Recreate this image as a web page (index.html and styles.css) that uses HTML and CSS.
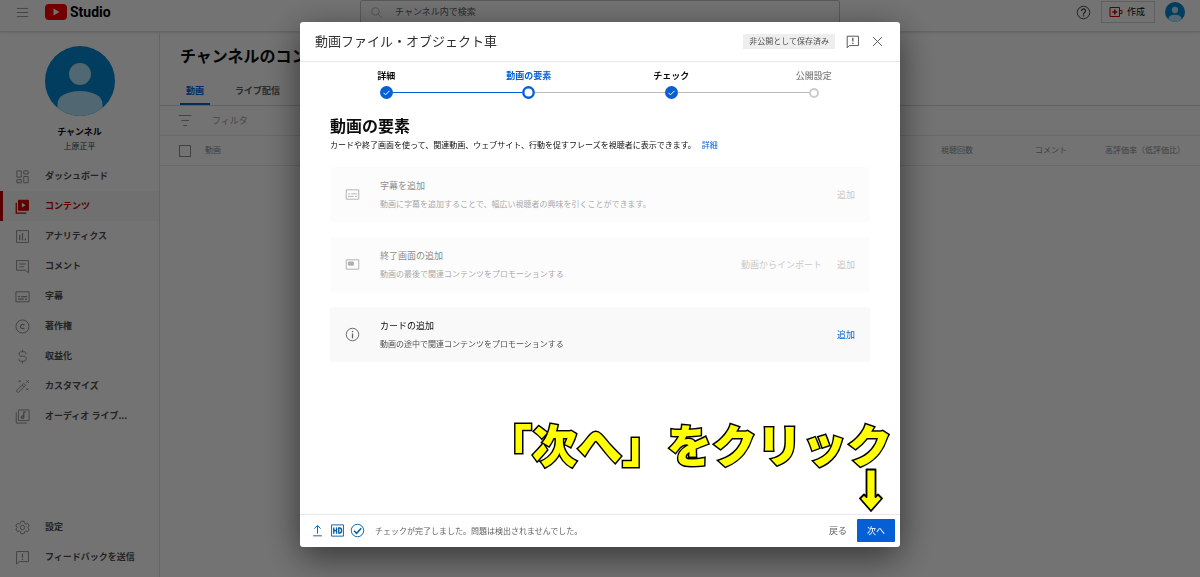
FILE: index.html
```html
<!DOCTYPE html>
<html lang="ja">
<head>
  <meta charset="UTF-8" />
  <meta name="viewport" content="width=device-width, initial-scale=1.0"/>
  <title>YouTube Studio</title>
  <link rel="stylesheet" href="styles.css">
</head>
<body>

  <!-- Top bar -->
  <header class="topbar">
    <div class="brand">
      <button class="icon-button" aria-label="メニュー">
        <svg class="icon" viewBox="0 0 24 24"><path d="M3 5.500h18M3 12h18M3 18.500h18"/></svg>
      </button>
      <a class="logo" href="#">
        <svg class="logo-mark" viewBox="0 0 22 16"><rect width="22" height="16" rx="4" fill="#f00"/><path d="M8.500 4.500v7l6-3.500z" fill="#fff"/></svg>
        <span>Studio</span>
      </a>
    </div>
    <label class="search">
      <svg class="icon" viewBox="0 0 24 24"><circle cx="10" cy="10" r="7"/><path d="M15 15l7 7"/></svg>
      <input type="text" placeholder="チャンネル内で検索" aria-label="チャンネル内で検索">
    </label>
    <div class="actions">
      <button class="icon-button" aria-label="ヘルプ">
        <svg class="icon help" viewBox="0 0 24 24"><circle cx="12" cy="12" r="10"/><path d="M8.800 9.500a3.200 3.200 0 1 1 5 2.600c-1.300.9-1.800 1.400-1.800 2.900M12 16.500v2" stroke-width="2"/></svg>
      </button>
      <button class="create">
        <svg class="create-icon" viewBox="0 0 14 12"><path d="M1 1.500h9.500v9H1zM10.500 4.500h2.500v3h-2.500"/><path d="M5.800 3.500v5M3.300 6h5" stroke-width="1.500"/></svg>
        作成
      </button>
      <svg class="avatar-small" viewBox="0 0 70 70"><use href="#avatar"/></svg>
    </div>
  </header>

  <div class="page">
    <!-- Side navigation -->
    <aside class="sidebar">
      <svg class="avatar" viewBox="0 0 70 70">
        <defs>
          <clipPath id="round"><circle cx="35" cy="35" r="35"/></clipPath>
          <g id="avatar" clip-path="url(#round)">
            <rect width="70" height="70" fill="#0288d1"/>
            <circle cx="35" cy="28" r="11" fill="#b3e5fc"/>
            <path d="M12.500 70V58c0-8 10-13 22.500-13s22.500 5 22.500 13v12z" fill="#b3e5fc"/>
          </g>
        </defs>
        <use href="#avatar"/>
      </svg>
      <div class="channel-label">チャンネル</div>
      <div class="channel-name">上原正平</div>

      <nav class="nav">
        <a href="#"><svg class="icon" viewBox="0 0 24 24"><path d="M3 3h7v10H3zM14 3h7v5h-7zM3 17h7v5H3zM14 12h7v10h-7z"/></svg>ダッシュボード</a>
        <a href="#" class="active"><svg class="icon" viewBox="0 0 24 24"><path d="M2 6v16.500H18" stroke-width="2"/><path d="M5.500 2h16v16h-16z" fill="#c00"/><path d="M11 6v7.500l6-3.700z" fill="#fff" stroke="none"/></svg>コンテンツ</a>
        <a href="#"><svg class="icon" viewBox="0 0 24 24"><path d="M2.500 2.500h19v19h-19z"/><path d="M7.500 9v9M12 6.500V18M16.500 15v3" stroke-width="2"/></svg>アナリティクス</a>
        <a href="#"><svg class="icon" viewBox="0 0 24 24"><path d="M2.500 2.500h19V22l-5-4h-14zM7 8h10M7 12.500h7"/></svg>コメント</a>
        <a href="#"><svg class="icon" viewBox="0 0 24 24"><path d="M1.500 4.500h21v16h-21z"/><path d="M5 12h3M10 12h9M5 16h9M16 16h3" stroke-width="2"/></svg>字幕</a>
        <a href="#"><svg class="icon" viewBox="0 0 24 24"><circle cx="12" cy="12" r="10.500"/><path d="M15 9.800a3.500 3.500 0 1 0 0 4.400" stroke-width="2"/></svg>著作権</a>
        <a href="#"><svg class="icon" viewBox="0 0 24 24"><path d="M17.500 8.500V6.500c0-1-.8-2-2-2h-6c-1.500 0-3 1-3 3.500s1.500 3.500 3 3.500h5c2 0 3.500 1.500 3.500 4s-1.500 4-3.500 4H8.500c-1.200 0-2-1-2-2v-2M12 1v3.500M12 19.500V23"/></svg>収益化</a>
        <a href="#"><svg class="icon" viewBox="0 0 24 24"><path d="M2 19L14 7l3 3L5 22zM11.500 9.500l3 3M6 2l3 3M9 2L6 5M18 2l4 4M22 2l-4 4M18 15l3 3M21 15l-3 3"/></svg>カスタマイズ</a>
        <a href="#"><svg class="icon" viewBox="0 0 24 24"><path d="M2 5.500v17h17M5.500 1.500h17v17h-17z"/><path d="M14 13V5h3.500" stroke-width="2"/><circle cx="12" cy="13" r="2" stroke-width="2"/></svg>オーディオ ライブ...</a>
      </nav>

      <nav class="nav nav-bottom">
        <a href="#"><svg class="icon" viewBox="0 0 24 24"><path d="M9.500 2h5l.7 3.200 2 1.200 3.200-1 2.300 4.200-2.400 2.200v.4l2.400 2.200-2.300 4.200-3.200-1-2 1.200-.7 3.200h-5l-.7-3.200-2-1.200-3.200 1-2.300-4.200 2.400-2.200v-.4L1.300 9.600l2.300-4.200 3.200 1 2-1.200z"/><circle cx="12" cy="12" r="3.500"/></svg>設定</a>
        <a href="#"><svg class="icon" viewBox="0 0 24 24"><path d="M2.500 2.500h19v16H7L2.500 22.500z"/><path d="M12 6v6M12 14v2" stroke-width="2"/></svg>フィードバックを送信</a>
      </nav>
    </aside>

    <!-- Channel content -->
    <main class="content">
      <h1>チャンネルのコンテンツ</h1>
      <div class="tabs">
        <button class="tab selected">動画</button>
        <button class="tab">ライブ配信</button>
      </div>
      <label class="filter">
        <svg class="icon" viewBox="0 0 24 24"><path d="M3 4h20M7 12h12M10 20h6"/></svg>
        <input type="text" placeholder="フィルタ" aria-label="フィルタ">
      </label>
      <table class="videos">
        <thead>
          <tr>
            <th class="col-check"><input type="checkbox" aria-label="すべて選択"></th>
            <th class="col-video">動画</th>
            <th class="col-views">視聴回数</th>
            <th class="col-comments">コメント</th>
            <th class="col-likes">高評価率（低評価比）</th>
          </tr>
        </thead>
      </table>
    </main>
  </div>

  <!-- Upload dialog -->
  <div class="overlay">
    <section class="dialog" role="dialog" aria-labelledby="dialog-title">
      <header class="dialog-header">
        <h2 id="dialog-title">動画ファイル・オブジェクト車</h2>
        <span class="badge">非公開として保存済み</span>
        <button class="icon-button" aria-label="フィードバック">
          <svg class="icon" viewBox="0 0 24 24"><path d="M3.500 3.500h18v15H7l-3.500 3.500z"/><path d="M12.500 6v6M12.500 14v2" stroke-width="2"/></svg>
        </button>
        <button class="icon-button" aria-label="閉じる">
          <svg class="icon" viewBox="0 0 24 24"><path d="M5 5l14 14M19 5L5 19"/></svg>
        </button>
      </header>

      <ol class="stepper">
        <li>
          <span>詳細</span>
          <div class="track">
            <i class="line none"></i>
            <svg class="marker" viewBox="0 0 13 13"><circle cx="6.500" cy="6.500" r="6.500" fill="#065fd4"/><path d="M3.500 6.800l2 2 4-4" fill="none" stroke="#fff"/></svg>
            <i class="line done"></i>
          </div>
        </li>
        <li class="current">
          <span>動画の要素</span>
          <div class="track">
            <i class="line done"></i>
            <svg class="marker" viewBox="0 0 13 13"><circle cx="6.500" cy="6.500" r="5.200" fill="#fff" stroke="#065fd4" stroke-width="2.400"/></svg>
            <i class="line"></i>
          </div>
        </li>
        <li>
          <span>チェック</span>
          <div class="track">
            <i class="line"></i>
            <svg class="marker" viewBox="0 0 13 13"><circle cx="6.500" cy="6.500" r="6.500" fill="#065fd4"/><path d="M3.500 6.800l2 2 4-4" fill="none" stroke="#fff"/></svg>
            <i class="line"></i>
          </div>
        </li>
        <li class="pending">
          <span>公開設定</span>
          <div class="track">
            <i class="line"></i>
            <svg class="marker small" viewBox="0 0 10 10"><circle cx="5" cy="5" r="4" fill="#fff" stroke="#ccc" stroke-width="2"/></svg>
            <i class="line none"></i>
          </div>
        </li>
      </ol>

      <div class="dialog-body">
        <h3>動画の要素</h3>
        <p class="lead">カードや終了画面を使って、関連動画、ウェブサイト、行動を促すフレーズを視聴者に表示できます。 <a href="#">詳細</a></p>

        <div class="card disabled">
          <svg class="icon" viewBox="0 0 24 24"><path d="M2 4.500h20v15H2z"/><path d="M5 11h3M10 11h9M5 15h9M16 15h3"/></svg>
          <div class="card-text">
            <h4>字幕を追加</h4>
            <p>動画に字幕を追加することで、幅広い視聴者の興味を引くことができます。</p>
          </div>
          <button disabled>追加</button>
        </div>

        <div class="card disabled">
          <svg class="icon" viewBox="0 0 24 24"><path d="M2 4.500h20v15H2z"/><path d="M5.500 8h8v5h-8z" fill="#606060"/></svg>
          <div class="card-text">
            <h4>終了画面の追加</h4>
            <p>動画の最後で関連コンテンツをプロモーションする</p>
          </div>
          <button disabled>動画からインポート</button>
          <button disabled>追加</button>
        </div>

        <div class="card">
          <svg class="icon" viewBox="0 0 24 24"><circle cx="12" cy="12" r="10"/><path d="M12 10.500V18M12 6.500v2" stroke-width="2"/></svg>
          <div class="card-text">
            <h4>カードの追加</h4>
            <p>動画の途中で関連コンテンツをプロモーションする</p>
          </div>
          <button>追加</button>
        </div>
      </div>

      <footer class="dialog-footer">
        <svg class="icon" viewBox="0 0 24 24"><path d="M12 17V4M7 9l5-5 5 5M5 20.500h14"/></svg>
        <svg class="icon" viewBox="0 0 24 24"><path d="M2.500 3h19v18h-19z"/><path d="M6 7v10M10.500 7v10M6 12h4.500M14 8v8h1.500c4 0 4-8 0-8z" stroke-width="2.200"/></svg>
        <svg class="icon" viewBox="0 0 24 24"><circle cx="12" cy="12" r="10"/><path d="M6.500 12.500l4 4 7.500-8" stroke-width="2.500"/></svg>
        <span class="status">チェックが完了しました。問題は検出されませんでした。</span>
        <button class="back">戻る</button>
        <button class="next">次へ</button>
      </footer>

      <div class="callout">
        <span>「次へ」をクリック</span>
        <svg viewBox="0 0 24 46"><path d="M7.500 2.500h9v27.500l2.500-2.500 4 4L12 44 1 31.500l4-4L7.500 30z" fill="#ff0" stroke="#000" stroke-width="1.800" stroke-linejoin="round"/></svg>
      </div>
    </section>
  </div>

</body>
</html>
```
FILE: styles.css
```css
* {
  box-sizing: border-box;
}
body {
  margin: 0;
  min-height: 100vh;
  display: flex;
  flex-direction: column;
  font-family: "Noto Sans CJK JP", sans-serif;
  font-size: 9px;
  line-height: 12px;
  color: #0d0d0d;
  background: #fff;
}
h1, h2, h3, h4, p, ol {
  margin: 0;
  padding: 0;
}
a {
  color: #065fd4;
  text-decoration: none;
}
button, input {
  font: inherit;
  color: inherit;
  background: none;
  border: 0;
  padding: 0;
  margin: 0;
}
button {
  cursor: pointer;
}
.icon {
  width: 15px;
  height: 15px;
  flex: none;
  display: block;
  fill: none;
  stroke: #909090;
  stroke-width: 1.5;
}

/* top bar */
.topbar {
  height: 32px;
  padding: 0 15px 10px;
  display: grid;
  grid-template-columns: 1fr 480px 1fr;
  align-items: center;
  border-bottom: 1px solid #e0e0e0;
  box-shadow: 0 1px 2px rgba(0,0,0,0.12);
}
.brand, .logo, .actions {
  display: flex;
  align-items: center;
}
.brand {
  gap: 15px;
}
.logo {
  gap: 3px;
  color: #000;
  font: bold 14px/22px Roboto, sans-serif;
}
.logo-mark {
  width: 22px;
  height: 16px;
}
.search {
  height: 24px;
  padding-left: 9px;
  display: flex;
  align-items: center;
  gap: 12px;
  border: 1px solid #c6c6c6;
  border-radius: 2px;
}
.search .icon {
  width: 13px;
  stroke: #b0b0b0;
}
.search input {
  flex: 1;
}
.search input::placeholder {
  color: #606060;
}
.actions {
  justify-content: flex-end;
  gap: 10px;
}
.help {
  stroke: #404040;
}
.create {
  height: 22px;
  padding: 0 9px 0 7px;
  display: flex;
  align-items: center;
  gap: 4px;
  border: 1px solid #d6d6d6;
}
.create-icon {
  width: 14px;
  height: 12px;
  fill: none;
  stroke: #c00;
}
.avatar-small {
  width: 20px;
  height: 20px;
}

/* sidebar */
.page {
  flex: 1;
  display: flex;
}
.sidebar {
  width: 160px;
  padding: 14px 0 5px;
  display: flex;
  flex-direction: column;
  border-right: 1px solid #e0e0e0;
  text-align: center;
}
.avatar {
  width: 70px;
  height: 70px;
  margin: 0 auto 10px;
}
.channel-label {
  font-weight: bold;
}
.channel-name {
  margin: 2px 0 9px;
  font-size: 8px;
  color: #404040;
}
.nav a {
  height: 30px;
  padding-left: 15px;
  display: flex;
  align-items: center;
  gap: 15px;
  font-weight: bold;
  color: #505050;
}
.nav .active {
  padding-left: 12px;
  border-left: 3px solid #c00;
  background: #f8f8f8;
  color: #c00;
}
.active .icon {
  stroke: #c00;
}
.nav-bottom {
  margin-top: auto;
}

/* channel content */
.content {
  flex: 1;
  min-width: 0;
}
.content h1 {
  padding: 11px 20px;
  font-size: 16px;
  line-height: 24px;
}
.tabs {
  padding: 0 20px;
  display: flex;
  gap: 19px;
  border-bottom: 1px solid #d8d8d8;
}
.tab {
  height: 27px;
  padding: 0 6px;
  font-weight: bold;
  color: #606060;
  border-bottom: 2px solid transparent;
}
.tab.selected {
  color: #065fd4;
  border-color: #065fd4;
}
.filter {
  height: 29px;
  padding: 0 17px;
  display: flex;
  align-items: center;
  gap: 20px;
}
.filter input::placeholder {
  color: #a0a0a0;
}
.videos {
  width: 100%;
  border-collapse: collapse;
  table-layout: fixed;
}
.videos th {
  height: 30px;
  padding: 0 0 2px;
  border-top: 1px solid #e8e8e8;
  border-bottom: 1px solid #e8e8e8;
  font-size: 8px;
  font-weight: normal;
  color: #909090;
  text-align: right;
}
.videos .col-check {
  width: 45px;
  padding: 0 0 0 19px;
  text-align: left;
}
.col-check input {
  appearance: none;
  display: block;
  width: 12px;
  height: 12px;
  border: 1px solid #909090;
}
.videos .col-video {
  text-align: left;
}
.col-views {
  width: 94px;
}
.col-comments {
  width: 94px;
}
.videos .col-likes {
  width: 133px;
  padding-right: 15px;
}

/* dialog */
.overlay {
  position: fixed;
  inset: 0;
  padding: 22px 16px 30px;
  display: flex;
  justify-content: center;
  background: rgba(0,0,0,0.55);
}
.dialog {
  position: relative;
  width: 100%;
  max-width: 600px;
  display: flex;
  flex-direction: column;
  background: #fff;
  border-radius: 3px;
  box-shadow: 0 10px 36px rgba(0,0,0,0.55);
}
.dialog-header {
  height: 40px;
  padding: 0 15px 1px;
  display: flex;
  align-items: center;
  gap: 10px;
  border-bottom: 1px solid #e8e8e8;
}
.dialog-header h2 {
  flex: 1;
  font-size: 13px;
  line-height: 18px;
  font-weight: normal;
  color: #303030;
}
.dialog-header .icon {
  stroke: #505050;
}
.badge {
  padding: 1px 6px 2px;
  font-size: 8px;
  color: #505050;
  background: #eee;
}
.stepper {
  padding: 8px 15px 0;
  display: grid;
  grid-template-columns: repeat(4, 1fr);
  list-style: none;
  text-align: center;
  font-weight: bold;
}
.stepper .current {
  color: #065fd4;
}
.stepper .pending {
  color: #808080;
  font-weight: 500;
}
.track {
  height: 13px;
  margin-top: 4px;
  display: flex;
  align-items: center;
}
.line {
  flex: 1;
  height: 1px;
  background: #bbb;
}
.line.done {
  background: #065fd4;
}
.line.none {
  background: none;
}
.marker {
  width: 13px;
  height: 13px;
}
.marker.small {
  width: 10px;
  height: 10px;
}
.dialog-body {
  flex: 1;
  padding: 14px 30px;
}
.dialog-body h3 {
  font-size: 16px;
  line-height: 24px;
}
.lead {
  margin: 2px 0 16px;
  font-size: 8px;
}
.lead a {
  margin-left: 4px;
}
.card {
  height: 55px;
  margin-bottom: 15px;
  padding: 0 15px;
  display: flex;
  align-items: center;
  gap: 15px;
  background: #f9f9f9;
  border-radius: 2px;
}
.card .icon {
  margin-right: 5px;
  stroke: #606060;
}
.card-text {
  flex: 1;
}
.card h4 {
  font-size: 9px;
  line-height: 19px;
  font-weight: normal;
}
.card p {
  font-size: 8px;
  line-height: 18px;
  color: #505050;
}
.card button {
  color: #065fd4;
}
.card.disabled {
  opacity: 0.5;
}
.card.disabled button {
  color: #909090;
}
.dialog-footer {
  height: 33px;
  padding: 0 5px 1px 10px;
  display: flex;
  align-items: center;
  gap: 5px;
  border-top: 1px solid #e8e8e8;
}
.dialog-footer .icon {
  stroke: #065fa4;
}
.status {
  flex: 1;
  padding-left: 5px;
  font-size: 8px;
  color: #606060;
}
.back {
  padding: 0 5px;
  color: #606060;
}
.next {
  height: 23px;
  padding: 0 10px;
  color: #fff;
  background: #065fd4;
  border-radius: 1px;
}

/* hint pointing at the next button */
.callout {
  position: absolute;
  right: 8px;
  bottom: 34px;
  display: flex;
  flex-direction: column;
  align-items: flex-end;
  pointer-events: none;
}
.callout span {
  font-size: 45px;
  line-height: 46px;
  font-weight: 900;
  white-space: nowrap;
  color: #ff0;
  -webkit-text-stroke: 3px #000;
  paint-order: stroke fill;
}
.callout svg {
  width: 24px;
  height: 46px;
  margin-right: 9px;
}
```
